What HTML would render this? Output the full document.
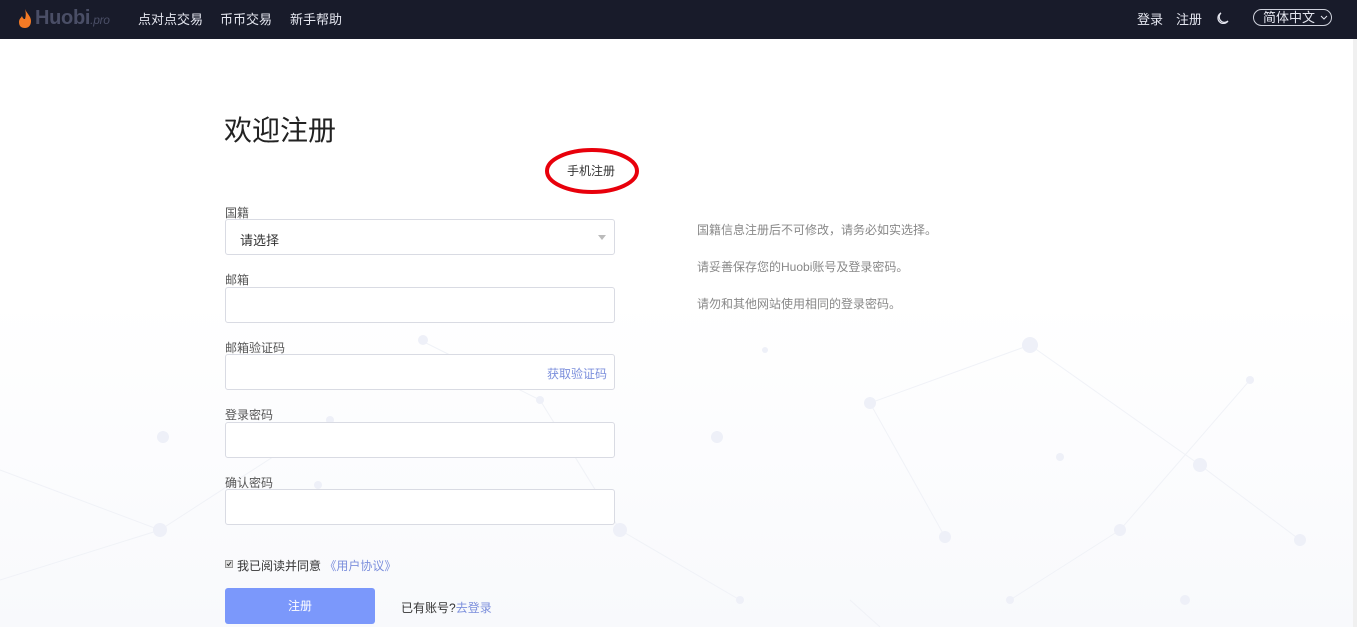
<!DOCTYPE html>
<html><head><meta charset="utf-8"><style>
*{margin:0;padding:0;box-sizing:border-box}
body{width:1357px;height:627px;overflow:hidden;font-family:"Liberation Sans","Noto Sans CJK SC",sans-serif;background:linear-gradient(#fff 0,#fff 300px,#f8f9fc 627px);position:relative;color:#333}
.nav{position:absolute;left:0;top:0;width:1357px;height:39px;background:#181b2a}
.nav span{position:absolute;top:9px;font-size:13px;color:#e4e6ef}
.field{position:absolute;left:225px;width:390px;height:36px;border:1px solid #d9dbe3;border-radius:3px;background:#fff}
.lbl{position:absolute;left:225px;font-size:12px;color:#555}
.tip{position:absolute;left:697px;font-size:12px;color:#888}
</style></head><body>
<svg style="position:absolute;left:0;top:0" width="1357" height="627">
<g stroke="#f0f2f7" stroke-width="1" fill="none">
<line x1="0" y1="470" x2="160" y2="530"/><line x1="160" y1="530" x2="330" y2="420"/><line x1="420" y1="340" x2="540" y2="400"/><line x1="540" y1="400" x2="620" y2="530"/><line x1="870" y1="403" x2="1030" y2="345"/><line x1="1030" y1="345" x2="1200" y2="465"/><line x1="1200" y1="465" x2="1300" y2="540"/><line x1="870" y1="403" x2="945" y2="537"/><line x1="1120" y1="530" x2="1250" y2="380"/><line x1="620" y1="530" x2="740" y2="600"/><line x1="0" y1="580" x2="160" y2="530"/><line x1="1010" y1="600" x2="1120" y2="530"/><line x1="850" y1="600" x2="880" y2="627"/>
</g>
<g fill="#eef0f8">
<circle cx="160" cy="530" r="7"/><circle cx="330" cy="420" r="4"/><circle cx="423" cy="340" r="5"/><circle cx="540" cy="400" r="4"/><circle cx="620" cy="530" r="7"/><circle cx="870" cy="403" r="6"/><circle cx="1030" cy="345" r="8"/><circle cx="1200" cy="465" r="7"/><circle cx="1300" cy="540" r="6"/><circle cx="945" cy="537" r="6"/><circle cx="1120" cy="530" r="6"/><circle cx="1250" cy="380" r="4"/><circle cx="717" cy="437" r="6"/><circle cx="163" cy="437" r="6"/><circle cx="1060" cy="457" r="4"/><circle cx="765" cy="350" r="3"/><circle cx="1185" cy="600" r="5"/><circle cx="740" cy="600" r="4"/><circle cx="318" cy="485" r="4"/><circle cx="1010" cy="600" r="4"/>
</g>
<ellipse cx="592" cy="171" rx="45" ry="21" fill="none" stroke="#e8000b" stroke-width="4"/>
</svg>
<div class="nav">
<svg style="position:absolute;left:18px;top:9px" width="14" height="20" viewBox="0 0 14 20"><path d="M7 0C9 5 13 7 13 12C13 17 10 19 7 19C3 19 1 17 1 13C1 10 3 9 4 7C5 10 6 10 7 10C8 7 8 4 7 0Z" fill="#f47a25"/></svg>
<span style="left:35px;top:7px;font-size:20px;font-weight:bold;color:#4a4e66;letter-spacing:-0.3px">Huobi<i style="font-size:12px;font-weight:normal">.pro</i></span>
<span style="left:138px">点对点交易</span>
<span style="left:220px">币币交易</span>
<span style="left:290px">新手帮助</span>
<span style="left:1137px">登录</span>
<span style="left:1176px">注册</span>
<svg style="position:absolute;left:1216px;top:12px" width="13" height="13" viewBox="0 0 13 13"><path d="M5 1A5.5 5.5 0 1 0 12 9A5 5 0 0 1 5 1Z" fill="none" stroke="#e4e6ef" stroke-width="1.2"/></svg>
<span style="left:1253px;top:9px;height:17px;width:79px;border:1px solid #cfd2dc;border-radius:9px;padding-left:9px;line-height:15px">简体中文<svg style="position:absolute;left:66px;top:5px" width="8" height="6" viewBox="0 0 8 6"><path d="M1 1L4 4L7 1" fill="none" stroke="#e4e6ef" stroke-width="1"/></svg></span>
</div>
<div style="position:absolute;left:224px;top:109px;font-size:28px;color:#222">欢迎注册</div>
<div style="position:absolute;left:567px;top:162px;font-size:12px;color:#333">手机注册</div>
<div class="lbl" style="top:204px">国籍</div>
<div class="field" style="top:219px"><span style="position:absolute;left:14px;top:10px;font-size:13px;color:#333">请选择</span><span style="position:absolute;right:8px;top:15px;border:4px solid transparent;border-top:5px solid #bbb"></span></div>
<div class="lbl" style="top:271px">邮箱</div>
<div class="field" style="top:287px"></div>
<div class="lbl" style="top:339px">邮箱验证码</div>
<div class="field" style="top:354px"><span style="position:absolute;right:7px;top:10px;font-size:12px;color:#7c8fdc">获取验证码</span></div>
<div class="lbl" style="top:406px">登录密码</div>
<div class="field" style="top:422px"></div>
<div class="lbl" style="top:474px">确认密码</div>
<div class="field" style="top:489px"></div>
<div style="position:absolute;left:225px;top:560px;width:8px;height:8px;border:1px solid #999;background:#ddd"><svg style="position:absolute;left:0;top:0" width="6" height="6" viewBox="0 0 6 6"><path d="M1 3L2.5 4.5L5 1" fill="none" stroke="#333" stroke-width="1"/></svg></div>
<div style="position:absolute;left:237px;top:557px;font-size:12px;color:#333">我已阅读并同意 <span style="color:#7c8fdc">《用户协议》</span></div>
<div style="position:absolute;left:225px;top:588px;width:150px;height:36px;background:#7b98fb;border-radius:3px;color:#fff;font-size:12px;text-align:center;line-height:36px">注册</div>
<div style="position:absolute;left:401px;top:599px;font-size:12px;color:#333">已有账号?<span style="color:#7c8fdc">去登录</span></div>
<div class="tip" style="top:221px">国籍信息注册后不可修改，请务必如实选择。</div>
<div class="tip" style="top:258px">请妥善保存您的Huobi账号及登录密码。</div>
<div class="tip" style="top:295px">请勿和其他网站使用相同的登录密码。</div>
<div style="position:absolute;right:0;top:39px;width:4px;height:588px;background:#f0f0f0"></div>
</body></html>
